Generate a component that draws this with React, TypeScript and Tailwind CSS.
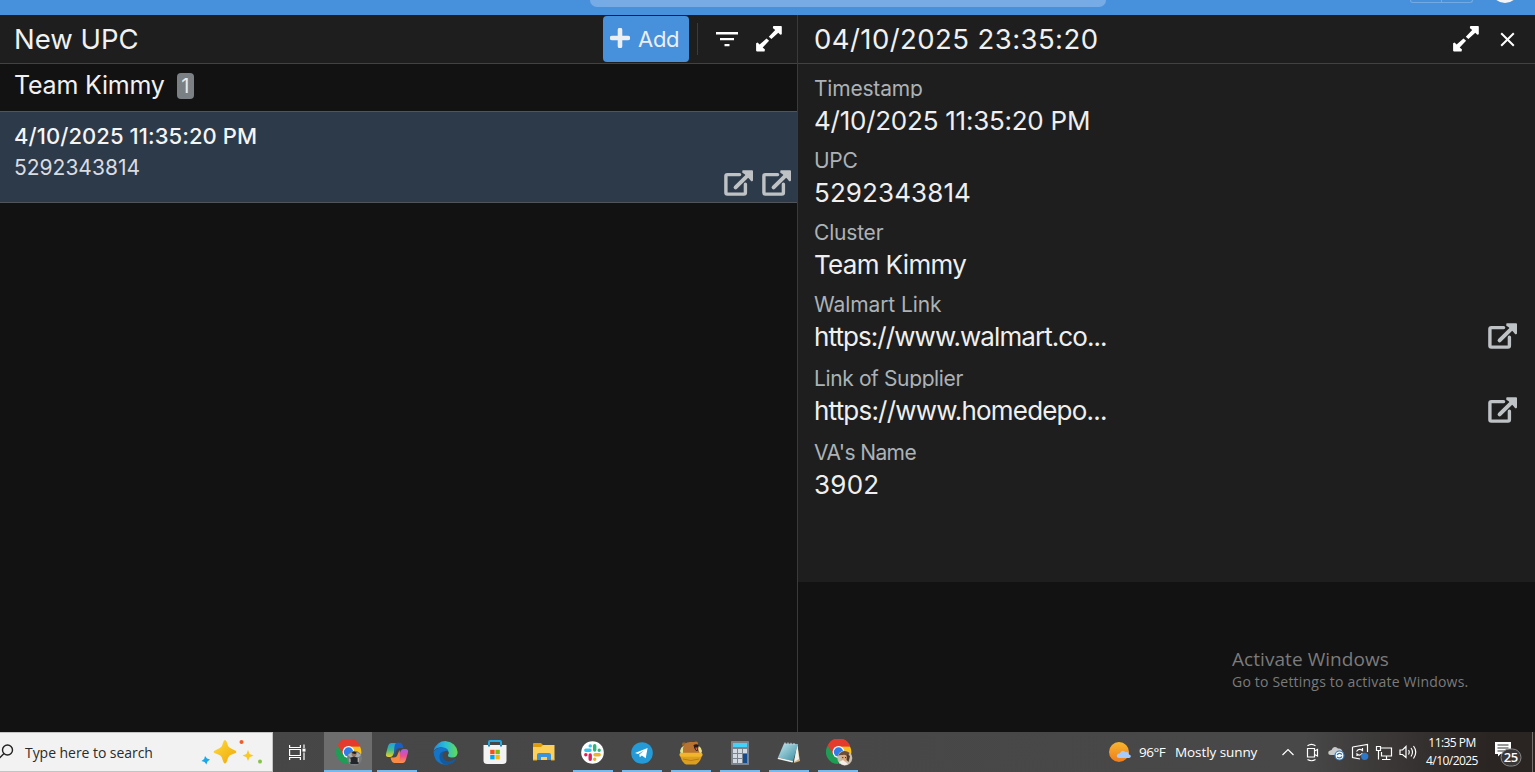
import React from "react";

const ExternalLink = () => (
  <svg width="30" height="27" viewBox="0 0 30 27" fill="none" className="block shrink-0">
    <path d="M15.6 4.6H3.4Q1.9 4.6 1.9 6.1V22.6Q1.9 24.1 3.4 24.1H19.9Q21.4 24.1 21.4 22.6V14.2" stroke="#bfc2c5" strokeWidth="3.4" strokeLinecap="round" />
    <path d="M11.6 17.4L24.6 4.6" stroke="#bfc2c5" strokeWidth="4" strokeLinecap="round" />
    <path d="M19 .3H28Q29 .3 29 1.3V10Q29 11.2 28 11.2H27.2L25.4 9 20.4 3.9 18.3 2.8V1Q18.3 .3 19 .3Z" fill="#bfc2c5" />
  </svg>
);

const Expand = () => (
  <svg width="26" height="26" viewBox="0 0 26 26" className="block shrink-0">
    <g fill="#fff">
      <path d="M17.3 0H25Q25.8 0 25.8 .8V8.2L24.3 8.8 22.3 6.8 15.4 13 12.8 10.8 19.2 4 16.8 2Z" />
      <path d="M8.5 25.4H.9Q.1 25.4 .1 24.6V17.2L1.6 16.6 3.6 18.6 10.5 12.6 13.1 14.8 6.7 21.4 9 23.4Z" />
    </g>
  </svg>
);

const Chrome = ({ avatar }: { avatar: React.ReactNode }) => (
  <svg width="28" height="28" viewBox="0 0 28 28" className="ml-[3px] block">
    <path d="M1.6 7A12 12 0 0 1 24 7.2L12.8 13Z" fill="#e33b2e" />
    <path d="M12.5 7.4H24A12 12 0 0 1 13.2 25L17 13Z" fill="#fbc116" />
    <path d="M1.9 6.5A12 12 0 0 0 12 25L17.3 16.5 9 17Z" fill="#1f9d55" />
    <path d="M1.9 6.6L7.8 16.5 13 7.2H24A12 12 0 0 0 1.9 6.6Z" fill="#e33b2e" />
    <circle cx="12.5" cy="13" r="5.9" fill="#fff" />
    <circle cx="12.5" cy="13" r="4.7" fill="#2f7de9" />
    {avatar}
  </svg>
);

const AvatarDark = () => (
  <g>
    <circle cx="18.500" cy="19.2" r="7.5" fill="#777d7e" />
    <path d="M11.8 16Q18 10 25 16L23 18H14Z" fill="#a4b0b2" />
    <circle cx="18" cy="15.5" r="2.4" fill="#9b735c" />
    <path d="M15.4 14Q18 11 21 14L19 15Z" fill="#1b1a1c" />
    <path d="M14 19L18 17.6 22 19 22.5 25H14.5Z" fill="#23252c" />
    <path d="M14 19.5V23M22.2 19V23" stroke="#d5c5bb" strokeWidth="1" />
  </g>
);

const AvatarLight = () => (
  <g>
    <circle cx="18.8" cy="19" r="7.5" fill="#c9bdad" />
    <path d="M12 16.5Q17 9 23.5 13.7L21 20 16 16Z" fill="#6d4f35" />
    <circle cx="18" cy="19" r="3.2" fill="#dba982" />
    <path d="M13 23L17 21 22 25Q17 28 13 23Z" fill="#f2efeb" />
    <path d="M21 15L24 17 22.6 23 20.5 21Z" fill="#513c2c" />
    <path d="M16.2 18.6H17.3M19 18.6H20" stroke="#38271e" />
  </g>
);

const Copilot = () => (
  <svg width="24" height="24" viewBox="0 0 24 24" className="block">
    <defs>
      <linearGradient id="cpa" x1="0" y1="0" x2="0" y2="1"><stop stopColor="#1f9fe8" /><stop offset=".5" stopColor="#43bd83" /><stop offset="1" stopColor="#f3cf22" /></linearGradient>
      <linearGradient id="cpb" x1="0" y1="0" x2="0" y2="1"><stop stopColor="#a45be8" /><stop offset=".5" stopColor="#ec4f90" /><stop offset="1" stopColor="#fb944a" /></linearGradient>
    </defs>
    <path d="M6.5 2H14Q10.7 4 9.7 9L8.5 13Q7.5 16 5 16H3.4Q0 16 1.2 12L3.1 5Q4 2 6.5 2Z" fill="url(#cpa)" />
    <path d="M11 1.7H15Q17 1.7 17.9 5L18.4 7H15Q11.8 7 11 10L9.4 14.5Q8.5 5 11 1.7Z" fill="#1a5ec8" />
    <path d="M17.5 22H10Q13 20 14 15L15.3 11Q16.3 8 18.8 8H20.5Q24 8 22.8 12L20.8 19Q20 22 17.5 22Z" fill="url(#cpb)" />
    <path d="M13 22H9Q7 22 6.2 19L5.5 16.5H8Q11.8 17 12.8 13L14.5 9Q16 18 13 22Z" fill="#fa8942" />
  </svg>
);

const Edge = () => (
  <svg width="25" height="25" viewBox="0 0 25 25" className="-ml-px block">
    <defs>
      <linearGradient id="eda"><stop stopColor="#2189df" /><stop offset=".5" stopColor="#29bfd6" /><stop offset="1" stopColor="#66da51" /></linearGradient>
    </defs>
    <path d="M.6 10.5A12.2 12.2 0 0 1 24.6 12Q24.7 17.5 19 17.5 14.3 17.4 15 15Q16.7 13 15 10.6 8 4 .6 10.5Z" fill="url(#eda)" />
    <path d="M.5 11.5Q4 7.3 9.4 7.5 14.5 7.9 15.3 11 10 10 9 15 9 21.8 16 22.5 19.5 22.8 23.2 18 19.8 24.8 12.2 24.7 1.3 24 .5 11.5Z" fill="#1573c8" />
    <path d="M10.8 11.2Q8 15 10.4 19 14 23.7 22.8 18.9 19.8 24.8 12.2 24.7 5.9 22.3 6.5 15.6 7.4 11.5 10.8 11.2Z" fill="#125ba3" />
  </svg>
);

const Store = () => (
  <svg width="24" height="25" viewBox="0 0 24 25" className="-ml-px block">
    <path d="M6 6V2Q6 1 7 1H17Q18 1 18 2V6" fill="none" stroke="#25a7df" strokeWidth="2" />
    <path d="M.5 5H23.5V20.5Q23.5 24 20 24H4Q.5 24 .5 20.5Z" fill="#f3f3f3" />
    <path d="M6 5V6.5M18 5V6.5" stroke="#1689c5" strokeWidth="2" />
    <path d="M7.2 9.8H11.6V14.2H7.2Z" fill="#f1511b" /><path d="M12.4 9.8H16.8V14.2H12.4Z" fill="#80bb10" />
    <path d="M7.2 15H11.6V19.4H7.2Z" fill="#00a4ee" /><path d="M12.4 15H16.8V19.4H12.4Z" fill="#fab908" />
  </svg>
);

const Explorer = () => (
  <svg width="22" height="20" viewBox="0 0 22 20" className="-mt-[2px] block">
    <path d="M0 2Q0 1 1 1H8L10 3V6H0Z" fill="#df9c0a" />
    <path d="M0 5H8L10 3H21.5V18H0Z" fill="#fdd05a" />
    <path d="M4 18V13Q4 11 6 11H16Q18 11 18 13V18H14V15H8V18Z" fill="#3a93dd" />
    <path d="M0 17.4H4V18.5H0ZM18 17.4H21.5V18.5H18Z" fill="#e5a91c" />
  </svg>
);

const Slack = () => (
  <svg width="23" height="23" viewBox="0 0 23 23" className="-ml-px block">
    <circle cx="11.5" cy="11.5" r="11.3" fill="#fff" />
    <g strokeWidth="3.400" strokeLinecap="round">
      <path d="M9.3 4.9H9.2M4.800 9.2H9" stroke="#36c5f0" /><path d="M13.700 4.800V9M18.200 9.3V9.2" stroke="#2eb67d" />
      <path d="M14 13.700H18.200M13.700 18.200V18.1" stroke="#ecb22e" /><path d="M9.2 14V18.200M4.800 13.700V13.8" stroke="#e01e5a" />
    </g>
  </svg>
);

const Telegram = () => (
  <svg width="22" height="22" viewBox="0 0 22 22" className="block">
    <circle cx="11" cy="11" r="10.8" fill="#249bd7" />
    <path d="M4 11L16.6 6 14.7 16.2 10.8 13.4 8.8 15.3 8.3 12.4 13.2 8.4 7 12Z" fill="#fff" />
  </svg>
);

const Bear = () => (
  <svg width="24" height="26" viewBox="0 0 24 26" className="block">
    <ellipse cx="12" cy="11" rx="11" ry="7" fill="#dfe38f" />
    <circle cx="5" cy="4.2" r="2" fill="#9a6427" /><circle cx="17" cy="3.5" r="2" fill="#b97831" />
    <path d="M4 14V8Q5 2 11 2H17Q20 4 19 8L21 14Z" fill="#b87331" />
    <path d="M14.5 5Q18 3 19.8 5.6L18.5 11Q15.5 11 14.5 5Z" fill="#2b1a1a" />
    <path d="M16.2 7.5H18.8L18 10H17Z" fill="#d35d58" />
    <path d="M1 14H23Q22.4 21 17 24.5H7Q2 22 1 14Z" fill="#dc9e1d" />
    <rect x=".4" y="12.8" width="23.2" height="4" rx="2" fill="#f0b52b" />
    <path d="M4 19Q12 22 20 19" stroke="#bc7e13" fill="none" />
  </svg>
);

const Calculator = () => (
  <svg width="18" height="24" viewBox="0 0 18 24" className="block">
    <rect width="18" height="24" rx=".7" fill="#7b838c" /><path d="M2 2H16V6H2Z" fill="#43d2f9" />
    <path d="M2 8H6V12H2ZM7 8H11V12H7ZM12 8H16V12H12ZM2 13H6V17H2ZM7 13H11V17H7ZM2 18H6V22H2ZM7 18H11V22H7Z" fill="#d3dae1" />
    <path d="M12 13H16V22H12Z" fill="#134b8c" />
  </svg>
);

const Notepad = () => (
  <svg width="24" height="24" viewBox="0 0 24 24" className="-ml-px block">
    <defs><linearGradient id="npa" x1="0" y1="0" x2="1" y2="1"><stop stopColor="#c3e8ed" /><stop offset="1" stopColor="#388ca1" /></linearGradient></defs>
    <path d="M20 3L23 20 17 22Z" fill="#d8b27c" />
    <path d="M20.5 3L22 18 17 21Z" fill="#edf1ef" />
    <path d="M7 2.5L21 3 16 20 1 16.5Z" fill="url(#npa)" />
    <path d="M1 16.5L16 20 15.5 21.5 .7 18Z" fill="#f0f5f3" />
    <path d="M8 1.5V3.5M11 1.5V3.5M14 1.8V3.8M17 2V4" stroke="#d7d7d7" />
  </svg>
);

const apps: { id: string; icon: React.ReactNode; state: string }[] = [
  { id: "chrome", icon: <Chrome avatar={<AvatarDark />} />, state: "active" },
  { id: "copilot", icon: <Copilot />, state: "open" },
  { id: "edge", icon: <Edge />, state: "" },
  { id: "store", icon: <Store />, state: "" },
  { id: "explorer", icon: <Explorer />, state: "" },
  { id: "slack", icon: <Slack />, state: "open" },
  { id: "telegram", icon: <Telegram />, state: "open" },
  { id: "bear", icon: <Bear />, state: "open" },
  { id: "calculator", icon: <Calculator />, state: "open" },
  { id: "notepad", icon: <Notepad />, state: "open" },
  { id: "chrome2", icon: <Chrome avatar={<AvatarLight />} />, state: "open" },
];

const fields = [
  { label: "Timestamp", value: "4/10/2025 11:35:20 PM", link: false, lt: "tracking-[-0.2px]", vt: "tracking-[-0.25px]" },
  { label: "UPC", value: "5292343814", link: false, lt: "tracking-[-0.3px]", vt: "tracking-[0.1px]" },
  { label: "Cluster", value: "Team Kimmy", link: false, lt: "tracking-[-0.2px]", vt: "tracking-[-0.65px]" },
  { label: "Walmart Link", value: "https://www.walmart.co...", link: true, lt: "tracking-[-0.1px]", vt: "tracking-[-0.92px]" },
  { label: "Link of Supplier", value: "https://www.homedepo...", link: true, lt: "tracking-[-0.38px]", vt: "tracking-[-0.8px]" },
  { label: "VA's Name", value: "3902", link: false, lt: "tracking-[-0.6px]", vt: "tracking-[0.25px]" },
];

const Taskbar = () => (
  <footer className="flex h-10 shrink-0 bg-linear-to-r from-[#464646] from-0% via-[#484848] via-85% to-[#2a2422] to-97% font-['Open_Sans',sans-serif] text-white">
    <div className="flex w-[273px] items-center border-y border-r border-[#c4c4c4] bg-[#f2f2f2]">
      <svg width="15" height="20" viewBox="0 0 15 20" fill="none" stroke="#222" strokeWidth="1.4"><circle cx="7.5" cy="8" r="5" /><path d="M4 11.5L-1 16.5" /></svg>
      <span className="ml-[10px] text-[14px] tracking-[-0.05px] text-[#2b2b2b]">Type here to search</span>
      <svg width="62" height="28" viewBox="0 0 62 28" className="ml-auto mr-[9px]">
        <defs><linearGradient id="sta" x1="0" y1="0" x2="1" y2="1"><stop stopColor="#ffdc35" /><stop offset="1" stopColor="#efa510" /></linearGradient></defs>
        <path d="M24 2Q25.5 2 27 8 28 10 32 11.4 35.5 12.6 35.5 14 35.5 15 32 16 28 17 27 20 25.5 25.5 24 25.5 22.5 25.5 21 20 20 17 16 16 12.5 15 12.5 14 12.5 12.6 16 11.4 20 10 21 8 22.5 2 24 2Z" fill="url(#sta)" />
        <path d="M47 12L48.5 16 52.5 17.5 48.5 19.3 47 23 45.5 19.3 41.5 17.5 45.5 16Z" fill="#fac821" />
        <path d="M4 18L6 20.5 9 21.5 6.5 23.5 5.4 26.4 3.5 24 .5 23 3.2 21Z" fill="#17a9ec" />
        <circle cx="40.5" cy="4" r="2" fill="#f25a2b" /><circle cx="59" cy="23.5" r="2" fill="#84c348" />
      </svg>
    </div>
    <div className="flex w-[51px] items-center justify-center pr-[3px]">
      <svg width="17" height="17" viewBox="0 0 17 17" fill="none" stroke="#fff" strokeWidth="1.2"><path d="M.6 1V3.5H11.4V1M.6 16V13.5H11.4V16M.6 5.5H11.4V11.5H.6ZM15 .5V4M15 8.5V16" /><path d="M13.5 4.6H16.5V7.6H13.5Z" fill="#fff" stroke="none" /></svg>
    </div>
    <div className="flex gap-px">
      {apps.map((a) => (
        <div key={a.id} className={a.state === "active" ? "flex w-12 flex-col items-center bg-[#6d6d6d]" : "flex w-12 flex-col items-center"}>
          <div className="flex h-[38px] items-center justify-center pt-[3px]">{a.icon}</div>
          <div className={a.state === "active" ? "h-[2px] w-full bg-[#76b9ed]" : a.state === "open" ? "h-[2px] w-10 bg-[#76b9ed]" : "h-[2px]"} />
        </div>
      ))}
    </div>
    <div className="ml-auto flex items-center">
      <svg width="24" height="22" viewBox="0 0 24 22" className="mr-[7px]">
        <defs><linearGradient id="sun" x1="0" y1="0" x2="0" y2="1"><stop stopColor="#f6b62e" /><stop offset="1" stopColor="#ee7c1c" /></linearGradient></defs>
        <circle cx="11" cy="11" r="10" fill="url(#sun)" />
        <path d="M11.5 17Q8 17 9 14 10 12.4 11.7 12.6 14 7.5 17.8 11.2 20.5 10.5 21 13.4 23.5 14 22.6 16 22.3 17 20.6 17Z" fill="#a7cbfa" />
      </svg>
      <span className="w-[36px] whitespace-nowrap text-[13.5px] tracking-[-0.5px]">96°F</span>
      <span className="w-[107px] whitespace-nowrap text-[13.5px] tracking-[-0.08px]">Mostly sunny</span>
      <svg width="135" height="20" viewBox="1282 742 135 20" fill="none" stroke="#fff" strokeWidth="1.2" className="mr-2">
        <path d="M1282.5 755L1288 749.5 1293.500 755" />
        <path d="M1307.500 748.500H1314.500V757H1307.500ZM1314.500 751L1317.500 749.500V756L1314.500 754.500M1307.500 745.800Q1311.500 743 1315.500 745.800M1307.500 759.500Q1311.500 762 1315.500 759.500" />
        <path d="M1331 755Q1327.500 755 1328.500 751.500 1330 750 1331.500 750 1333.500 745 1338 748.500 1342 748 1342.500 752V755Z" fill="#c9c9c9" stroke="none" />
        <circle cx="1339.500" cy="755.500" r="4.500" fill="#fff" stroke="#2676c6" /><path d="M1337 755Q1339 752 1342 754.500M1342 756.500Q1339.500 759 1337 757" stroke="#2676c6" />
        <path d="M1352.500 747L1367.500 744.500V752M1352.500 747V757.500L1360 759M1356.500 751.500Q1359 748 1362.500 750.500V748M1362.500 753Q1360 756.500 1357 754V756" />
        <circle cx="1364.700" cy="756.300" r="3.600" fill="#2d78c7" stroke="none" />
        <path d="M1381 748H1391.500V756H1381.500V752M1386.500 756V759M1382 759.500H1390.500M1376.500 746.500H1380.500V750.500H1376.500ZM1378.500 750.500V759.500" />
        <path d="M1400 750H1402.500L1406 746.500V757.500L1402.500 754.500H1400ZM1408.500 750Q1410 752 1408.500 754.500M1411 748Q1414 752 1411 756.500M1413.500 746Q1418 752 1413.500 758.500" />
      </svg>
      <div className="w-[54px] text-center text-[12px] leading-[18px] tracking-[-0.55px] whitespace-nowrap"><div>11:35 PM</div><div>4/10/2025</div></div>
      <svg width="28" height="26" viewBox="0 0 28 26" className="ml-[16px] mr-[9px] mt-[3px]">
        <path d="M0 1H16V13H5.500L3 15.500V13H0Z" fill="#fff" /><path d="M2.500 4H13.500M2.500 7H13.500M2.500 10H10" stroke="#333" strokeWidth="1.200" />
        <rect x="6" y="8" width="20" height="17" rx="8.500" fill="#393737" stroke="#8a8a8a" />
        <text x="15.700" y="21.200" textAnchor="middle" fill="#fff" fontSize="13" fontWeight="600" fontFamily="Open Sans" letterSpacing="-.6">25</text>
      </svg>
      <div className="mr-[2px] h-10 w-px bg-[#77716e]" />
    </div>
  </footer>
);

export default function App() {
  return (
    <div className="relative flex h-[772px] w-[1535px] flex-col overflow-hidden bg-[#121212] font-['Inter',sans-serif] text-[#f1f1f1]">
      <header className="flex h-[15px] shrink-0 items-start bg-[#4690dc]">
        <div className="ml-[590px] h-[7px] w-[516px] rounded-b-[8px] bg-[#77abe5]" />
        <div className="ml-[304px] flex h-[3px] w-[63px] rounded-b-[4px] border border-t-0 border-[#73aae4]"><div className="w-[31px] border-r border-[#73aae4]" /></div>
        <svg width="22" height="4" viewBox="0 0 22 4" className="ml-[21px]"><circle cx="11" cy="-11" r="14" fill="#f4f4f4" /></svg>
      </header>
      <main className="flex min-h-0 flex-1">
        <section className="flex w-[798px] flex-col border-r border-[#3a3a3a]">
          <div className="flex h-[49px] shrink-0 items-center border-b border-[#424242] bg-[#1e1e1e] pl-[14px] pr-[15px]">
            <h1 className="text-[27.500px] leading-[48px]">New UPC</h1>
            <button className="ml-auto flex h-[46px] w-[86px] items-center rounded-[4px] bg-[#4690dc] pl-[7px] text-[#ebeef2]">
              <svg width="20" height="20" viewBox="0 0 20 20" className="mb-[2px]"><path d="M10 2V18M2 10H18" stroke="#ebeef2" strokeWidth="4.600" strokeLinecap="round" /></svg>
              <span className="ml-[8px] text-[22px] tracking-[-0.3px]">Add</span>
            </button>
            <div className="ml-2 h-8 w-px bg-[#3b3b3b]" />
            <svg width="22" height="15" viewBox="0 0 22 15" className="ml-[18px] mr-[18px]"><path d="M0 0H22V2.500H0ZM4 6H18V8.300H4ZM8.500 12H13.500V14.300H8.500Z" fill="#fff" /></svg>
            <Expand />
          </div>
          <div className="flex h-[47px] shrink-0 pl-[14px]">
            <h2 className="text-[25px] leading-[42px] tracking-[-0.2px]">Team Kimmy</h2>
            <span className="ml-[12px] mt-[9px] flex h-[26px] w-[17px] items-center justify-center rounded-[4px] bg-[#7b8085] text-[20px] text-[#e9eaeb]">1</span>
          </div>
          <article className="flex h-[92px] shrink-0 justify-between border-y border-[#515559] bg-[#2d3a4a] pl-[14px] pr-[13px] pt-3">
            <div>
              <div className="text-[22px] font-medium leading-6 tracking-[0.07px] text-[#f5f5f5]">4/10/2025 11:35:20 PM</div>
              <div className="mt-[8px] text-[21px] leading-6 text-[#d9dce0]">5292343814</div>
            </div>
            <div className="-mr-[8px] mt-[46px] flex gap-2"><ExternalLink /><ExternalLink /></div>
          </article>
        </section>
        <section className="flex min-w-0 flex-1 flex-col">
          <div className="flex h-[49px] shrink-0 items-center border-b border-[#424242] bg-[#1e1e1e] pl-4 pr-[20px]">
            <h1 className="text-[27.500px] leading-[48px] tracking-[0.43px]">04/10/2025 23:35:20</h1>
            <div className="ml-auto mr-[21px]"><Expand /></div>
            <svg width="15" height="15" viewBox="0 0 15 15"><path d="M1.200 1.200L13.800 13.800M13.800 1.200L1.200 13.800" stroke="#fff" strokeWidth="2" /></svg>
          </div>
          <div className="flex h-[518px] shrink-0 flex-col bg-[#1e1e1e] pl-4 pr-[17px] pt-[9px]">
            {fields.map((f) => (
              <div key={f.label} className={f.link ? "flex h-[74px] shrink-0 justify-between" : "flex h-[72px] shrink-0 justify-between"}>
                <div>
                  <div className={`mb-[5px] h-[25px] overflow-hidden text-[21px] leading-[32px] text-[#acb2b7] ${f.lt}`}>{f.label}</div>
                  <div className={`text-[26px] leading-[36px] text-[#efefef] ${f.vt}`}>{f.value}</div>
                </div>
                {f.link && <div className="mt-[34px]"><ExternalLink /></div>}
              </div>
            ))}
          </div>
        </section>
      </main>
      <aside className="absolute left-[1232px] top-[648px] whitespace-nowrap font-['Open_Sans',sans-serif] text-[#7b7b7b]">
        <div className="text-[19px] leading-[22px] tracking-[0.06px]">Activate Windows</div>
        <div className="mt-px text-[14px] leading-[22px] tracking-[0.2px]">Go to Settings to activate Windows.</div>
      </aside>
      <Taskbar />
    </div>
  );
}
